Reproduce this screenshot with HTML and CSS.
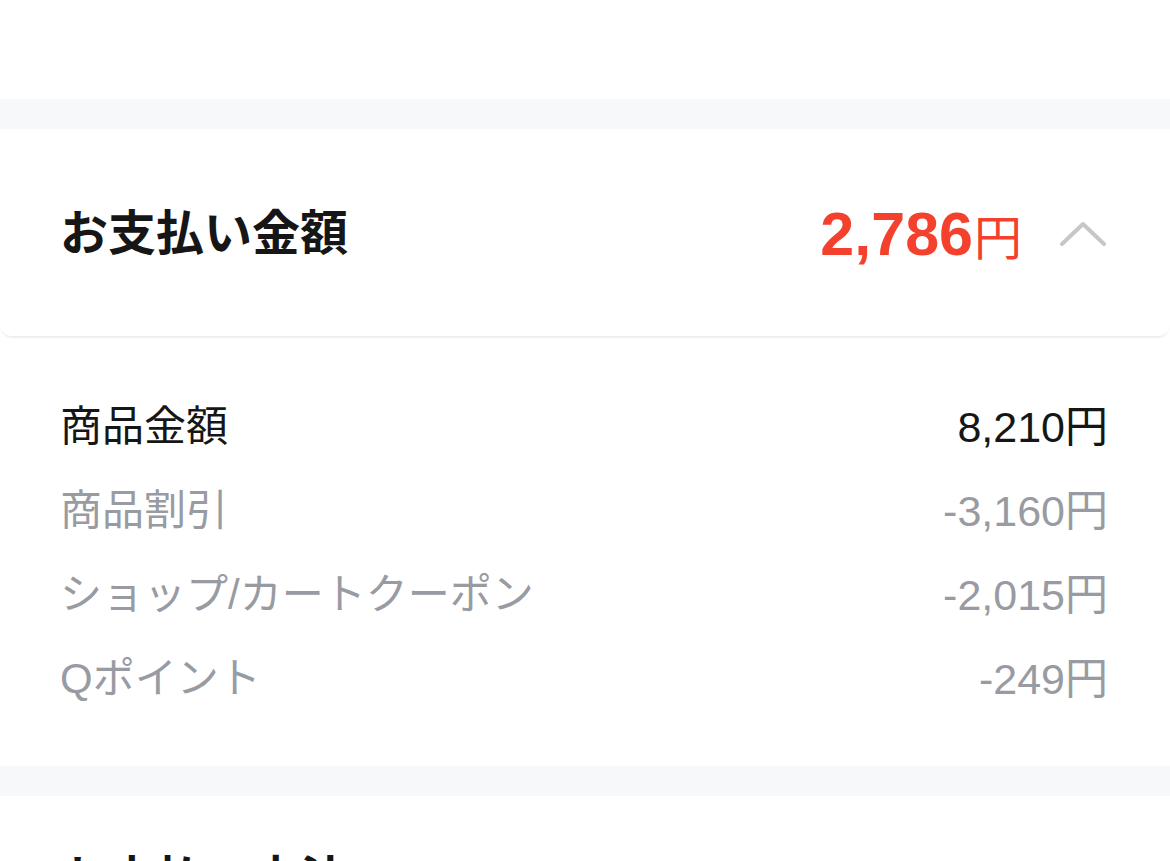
FILE: index.html
```html
<!DOCTYPE html>
<html lang="ja">
<head>
<meta charset="utf-8">
<title>お支払い金額</title>
<link rel="stylesheet" href="styles.css">
</head>
<body>
<div class="page">
  <div class="top-space"></div>
  <div class="band"></div>
  <section class="summary-card">
    <h2 class="summary-title">お支払い金額</h2>
    <div class="summary-right">
      <span class="total"><span class="total-num">2,786</span><span class="total-yen">円</span></span>
      <svg class="chevron" width="46" height="25" viewBox="0 0 46 25" aria-hidden="true">
        <polyline points="2,23 23,3 44,23" fill="none" stroke="#c6c7c9" stroke-width="4" stroke-linecap="round" stroke-linejoin="round"/>
      </svg>
    </div>
  </section>
  <div class="details">
    <div class="row row-main"><span class="label">商品金額</span><span class="value">8,210円</span></div>
    <div class="row"><span class="label">商品割引</span><span class="value">-3,160円</span></div>
    <div class="row"><span class="label">ショップ/カートクーポン</span><span class="value">-2,015円</span></div>
    <div class="row"><span class="label">Qポイント</span><span class="value">-249円</span></div>
  </div>
  <div class="band"></div>
  <section class="next-section">
    <h2 class="next-title">お支払い方法</h2>
  </section>
</div>
</body>
</html>
```
FILE: styles.css
```css
html, body {
  margin: 0;
  padding: 0;
  background: #ffffff;
}
body {
  font-family: "Liberation Sans", "Noto Sans CJK JP", sans-serif;
  color: #151515;
  overflow: hidden;
}
.page {
  width: 1170px;
  height: 861px;
  overflow: hidden;
  display: flex;
  flex-direction: column;
}
.top-space {
  height: 99px;
  flex: none;
}
.band {
  height: 30px;
  flex: none;
  background: #f7f8fa;
}
.summary-card {
  flex: none;
  height: 207px;
  box-sizing: border-box;
  padding: 3px 64px 0 60px;
  display: flex;
  align-items: center;
  justify-content: space-between;
  background: #ffffff;
  border-radius: 12px;
  box-shadow: 0 3px 2px -1px rgba(0, 0, 0, 0.07);
  position: relative;
  z-index: 1;
}
.summary-title {
  margin: 0;
  font-size: 48px;
  font-weight: 700;
  color: #161616;
  line-height: 1;
}
.summary-right {
  display: flex;
  align-items: center;
  gap: 38px;
}
.total {
  color: #f4412d;
  display: flex;
  align-items: baseline;
  line-height: 1;
}
.total-num {
  font-size: 61px;
  font-weight: 700;
}
.total-yen {
  font-size: 48px;
  font-weight: 400;
  margin-left: 1px;
}
.chevron {
  display: block;
  margin-top: -1px;
}
.details {
  flex: none;
  padding: 47px 62px 45px 60px;
  display: flex;
  flex-direction: column;
  margin-top: 2px;
}
.row {
  height: 84px;
  display: flex;
  align-items: center;
  justify-content: space-between;
  font-size: 42px;
  color: #999ba3;
}
.row-main {
  color: #161616;
}
.label {
  line-height: 1;
}
.value {
  line-height: 1;
  font-size: 43px;
}
.next-section {
  flex: none;
  padding: 60px 62px 0 60px;
}
.next-title {
  margin: 0;
  font-size: 48px;
  font-weight: 700;
  line-height: 1;
  color: #161616;
}
```
